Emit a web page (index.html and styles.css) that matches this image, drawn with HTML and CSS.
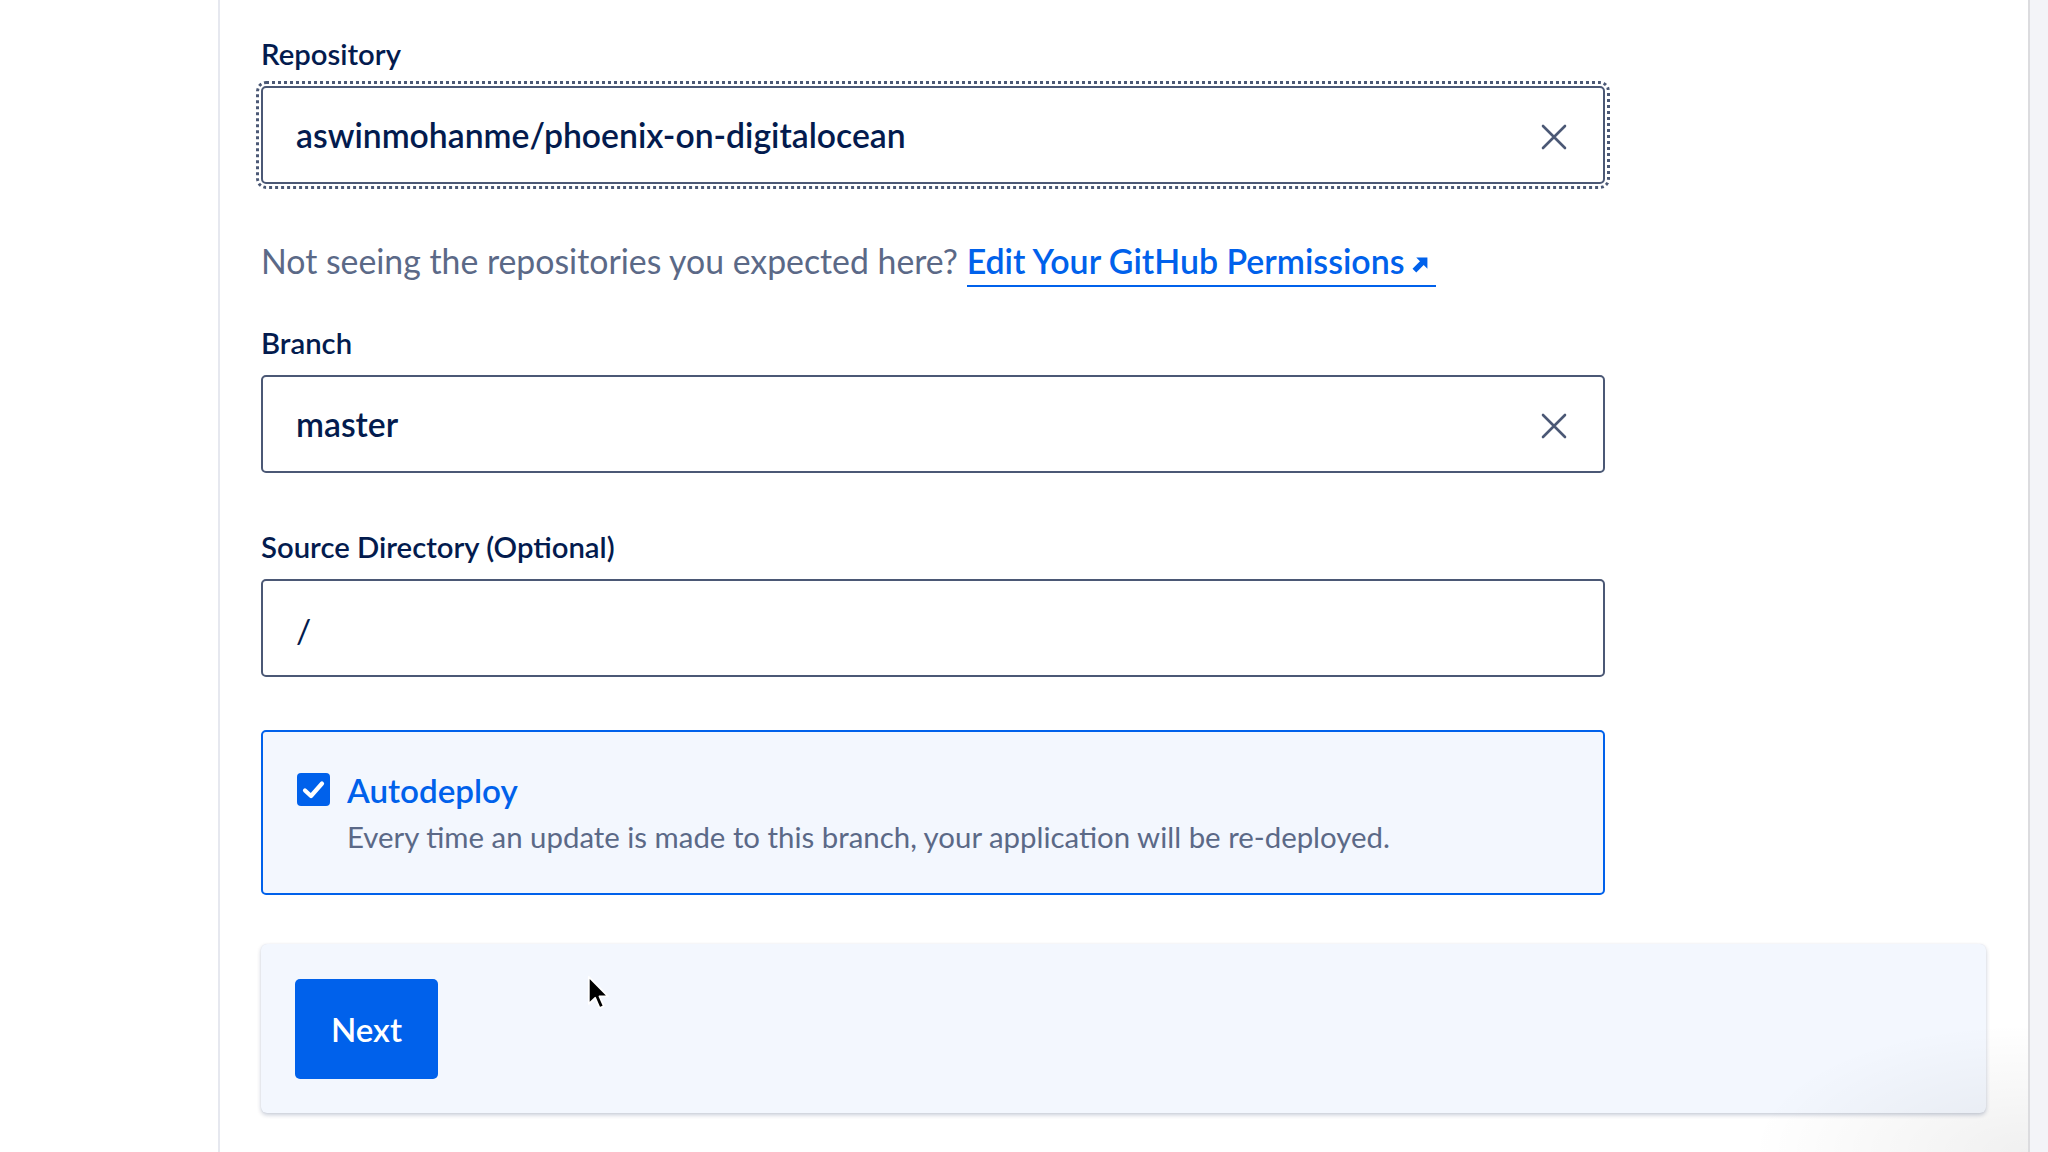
FILE: index.html
```html
<!DOCTYPE html>
<html lang="en">
<head>
<meta charset="utf-8">
<title>Create App - Source</title>
<link rel="stylesheet" href="styles.css">
</head>
<body>
<div class="app">
  <aside class="sidebar"></aside>
  <main class="content">
    <div class="field">
      <label class="label">Repository</label>
      <div class="input input-focused">
        <span class="input-value">aswinmohanme/phoenix-on-digitalocean</span>
        <svg class="clear" viewBox="0 0 28 28" width="28" height="28"><path d="M3 3 L25 25 M25 3 L3 25" stroke="#4b5875" stroke-width="2.6" fill="none" stroke-linecap="round"/></svg>
      </div>
    </div>

    <p class="hint">Not seeing the repositories you expected here? <a class="link" href="#">Edit Your GitHub Permissions<svg class="ext" viewBox="0 0 16 16" width="17" height="17"><path d="M4 1.5 H14.5 V12 L11 8.5 L4 15.5 L0.5 12 L7.5 5 Z" fill="#0061eb"/></svg></a></p>

    <div class="field field-branch">
      <label class="label">Branch</label>
      <div class="input">
        <span class="input-value">master</span>
        <svg class="clear" viewBox="0 0 28 28" width="28" height="28"><path d="M3 3 L25 25 M25 3 L3 25" stroke="#4b5875" stroke-width="2.6" fill="none" stroke-linecap="round"/></svg>
      </div>
    </div>

    <div class="field field-source">
      <label class="label">Source Directory (Optional)</label>
      <div class="input">
        <span class="input-value input-plain">/</span>
      </div>
    </div>

    <div class="autodeploy">
      <div class="auto-row">
        <span class="checkbox"><svg viewBox="0 0 33 33" width="33" height="33"><path d="M8 17.5 L14 23 L25 10.5" stroke="#fff" stroke-width="4.2" fill="none" stroke-linecap="round" stroke-linejoin="round"/></svg></span>
        <span class="auto-title">Autodeploy</span>
      </div>
      <p class="auto-desc">Every time an update is made to this branch, your application will be re-deployed.</p>
    </div>

    <div class="footer-bar">
      <button class="btn-next">Next</button>
    </div>
  </main>
  <div class="scrollbar"></div>
</div>
<svg class="cursor" viewBox="0 0 20 30" width="24" height="36"><path d="M1.5 1.5 L1.5 24 L6.8 19 L10.5 27.5 L14 26 L10.4 17.8 L17.5 17.8 Z" fill="#000" stroke="#fff" stroke-width="1.5" stroke-linejoin="round"/></svg>
<div class="vignette"></div>
</body>
</html>
```
FILE: styles.css
```css
* { box-sizing: border-box; }
html, body { margin: 0; padding: 0; }
body {
  width: 2048px;
  height: 1152px;
  overflow: hidden;
  background: #fff;
  font-family: "Lato", "Liberation Sans", sans-serif;
  color: #031b4e;
  position: relative;
}
.app {
  display: flex;
  height: 1152px;
}
.sidebar {
  width: 220px;
  flex: none;
  border-right: 2px solid #e6e8ef;
}
.content {
  flex: 1;
  padding: 38px 42px 0 41px;
}
.field { display: flex; flex-direction: column; }
.label {
  font-size: 29.3px;
  line-height: 32px;
  font-weight: 600;
  color: #031b4e;
  margin-bottom: 16px;
}
.input {
  width: 1344px;
  height: 98px;
  border: 2px solid #4b5875;
  border-radius: 5px;
  display: flex;
  align-items: center;
  justify-content: space-between;
  padding: 0 35px 0 33px;
  background: #fff;
}
.input-focused {
  outline: 3px dotted #4b5875;
  outline-offset: 2px;
}
.input-value {
  font-size: 33.7px;
  font-weight: 600;
  color: #031b4e;
}
.input-plain { font-weight: 400; margin-top: 4px; }
.clear { flex: none; margin-top: 4px; }
.hint {
  margin: 57px 0 0 0;
  font-size: 33.8px;
  line-height: 40px;
  color: #5b6987;
}
.link {
  display: inline-block;
  color: #0061eb;
  font-weight: 600;
  font-size: 33.9px;
  text-decoration: none;
  border-bottom: 2px solid #0061eb;
  padding: 0 7px 4px 0;
  line-height: 40px;
}
.ext { margin-left: 8px; vertical-align: 1px; }
.field-branch { margin-top: 40px; }
.field-source { margin-top: 58px; }
.autodeploy {
  margin-top: 53px;
  width: 1344px;
  height: 165px;
  border: 2px solid #0061eb;
  border-radius: 5px;
  background: #f3f7fe;
  padding: 41px 34px 0 34px;
}
.auto-row { display: flex; align-items: center; gap: 17px; height: 33px; }
.checkbox {
  width: 33px; height: 33px;
  background: #0061eb;
  border-radius: 4px;
  display: flex;
}
.auto-title {
  font-size: 33.2px;
  font-weight: 600;
  color: #0061eb;
}
.auto-desc {
  margin: 14px 0 0 50px;
  font-size: 29.4px;
  line-height: 34px;
  color: #5b6987;
}
.footer-bar {
  margin-top: 49px;
  width: 1725px;
  height: 169px;
  background: #f3f7fe;
  border-radius: 6px;
  box-shadow: 0 2px 4px rgba(3, 27, 78, 0.22), 0 0 1px rgba(3, 27, 78, 0.1);
  padding: 35px 34px;
}
.btn-next {
  width: 143px;
  height: 100px;
  border: none;
  border-radius: 5px;
  background: #0061eb;
  color: #fff;
  font-family: "Lato", "Liberation Sans", sans-serif;
  font-size: 33px;
  font-weight: 600;
  padding: 0;
}
.scrollbar {
  width: 20px;
  flex: none;
  border-left: 2px solid #dcdcdf;
  background: #f3f4f8;
}
.cursor {
  position: absolute;
  left: 587px;
  top: 975px;
}
.vignette {
  position: absolute;
  right: 20px;
  bottom: 0;
  width: 280px;
  height: 130px;
  background: radial-gradient(ellipse at 100% 100%, rgba(0, 0, 0, 0.06), rgba(0, 0, 0, 0) 70%);
  pointer-events: none;
}
```
